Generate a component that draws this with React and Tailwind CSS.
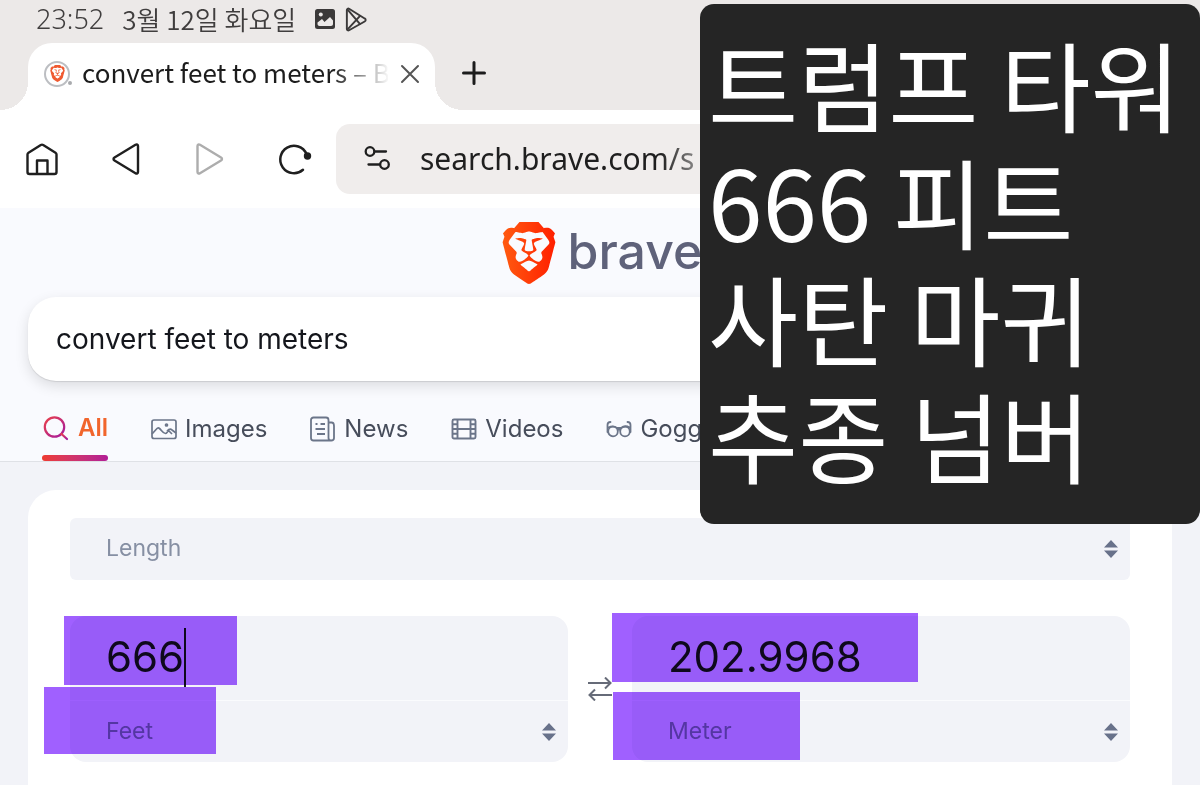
import { useState } from 'react';
import { SiBrave } from 'react-icons/si';

function Sorter({ className = '' }) {
    return (
        <svg viewBox="0 0 14 18" className={`pointer-events-none absolute h-[18px] w-[14px] fill-[#68718a] ${className}`}>
            <path d="M7 0l7 7.5H0zM7 18L0 10.5h14z" />
        </svg>
    );
}

function StatusBar() {
    return (
        <div className="flex h-[43px] items-start pl-9 pt-1 text-[26px] leading-[30px] font-[350] text-[#403e3e] font-['Noto_Sans_CJK_KR',sans-serif]">
            <span className="text-[27px] font-['Noto_Sans',sans-serif]">23:52</span>
            <span className="ml-[18px]">3월 12일 화요일</span>
            <svg viewBox="0 0 22 22" className="ml-[18px] mt-1 h-[22px] w-[22px]">
                <rect x="1" y="1" width="20" height="20" rx="2.5" fill="#3b3939" />
                <path d="M3.5 14.5L8 11l2.500 3 5.500-5 3 3.500V16c0 1-1 2-2 2H5.500c-1 0-2-1-2-2z" fill="#ece9e8" />
                <circle cx="6.800" cy="6.500" r="2" fill="#ece9e8" />
            </svg>
            <svg viewBox="0 0 24 26" className="ml-2 mt-[3px] h-[25px] w-6 fill-none stroke-[#3b3939] stroke-2" strokeLinejoin="round" strokeLinecap="round">
                <path d="M2.500 3.200v19.600c0 1.300 1.200 2 2.300 1.400L21 15.100c1.400-.8 1.400-2.400 0-3.200L4.800 1.800c-1.100-.6-2.300.1-2.300 1.400z" />
                <path d="M3.500 3L16 17.500M3.500 23L16 9.500" />
            </svg>
        </div>
    );
}

function TabStrip() {
    return (
        <div className="flex h-[67px] items-end">
            <div className="h-7 w-7 bg-[radial-gradient(circle_at_0_0,transparent_28px,white_28px)]" />
            <div className="flex h-full w-[407px] items-center rounded-t-[24px] bg-white pb-[6px] pl-4 pr-3">
                <span className="relative flex h-[26px] w-[26px] shrink-0 items-center justify-center rounded-full border-2 border-[#bcbec2]">
                    <SiBrave className="text-[17px] text-[#ef5a31]" />
                    <i className="absolute -right-1 bottom-0 h-1 w-1 rounded-full bg-[#a9abae]" />
                </span>
                <span className="ml-3 w-[306px] overflow-hidden whitespace-nowrap pb-1 text-[26px] leading-9 text-[#1c1c1c] font-['Noto_Sans_CJK_KR',sans-serif] [mask-image:linear-gradient(to_right,black_250px,transparent_308px)]">
                    convert feet to meters – Brave
                </span>
                <button aria-label="Close tab" className="ml-3 shrink-0">
                    <svg viewBox="0 0 20 20" className="h-5 w-5 fill-none stroke-[#555] stroke-2" strokeLinecap="round">
                        <path d="M2 2l16 16M18 2L2 18" />
                    </svg>
                </button>
            </div>
            <div className="h-7 w-7 bg-[radial-gradient(circle_at_100%_0,transparent_28px,white_28px)]" />
            <button aria-label="New tab" className="-ml-px mb-[25px]">
                <svg viewBox="0 0 24 24" className="h-6 w-6 fill-none stroke-[#1c1c1c] stroke-3" strokeLinecap="round">
                    <path d="M12 1.500v21M1.500 12h21" />
                </svg>
            </button>
        </div>
    );
}

function Toolbar() {
    return (
        <div className="flex h-[98px] items-center bg-white pl-6">
            <div className="flex w-[312px] items-center gap-12">
                <button aria-label="Home">
                    <svg viewBox="0 0 36 36" className="h-9 w-9 fill-none stroke-[#1f1f1f] stroke-[2.4]" strokeLinejoin="round">
                        <path d="M3.500 13.500c0-.8.200-1.300 1-1.800L16.800 4c.8-.5 1.600-.5 2.400 0L31.500 11.700c.8.500 1 1 1 1.800V31c0 1.500-.5 2-2 2h-25c-1.500 0-2-.5-2-2z" />
                        <path d="M13 33V19.500h10.500V33" />
                    </svg>
                </button>
                <button aria-label="Back">
                    <svg viewBox="0 0 36 36" className="h-9 w-9 fill-none stroke-[#1f1f1f] stroke-[2.400]" strokeLinejoin="round">
                        <path d="M6.500 16.500L27.500 3.800c1.300-.8 2.500-.2 2.500 1.300v25.800c0 1.500-1.200 2.100-2.500 1.300L6.500 19.500c-1.300-.8-1.300-2.200 0-3z" />
                    </svg>
                </button>
                <button aria-label="Forward">
                    <svg viewBox="0 0 36 36" className="h-9 w-9 fill-none stroke-[#adadad] stroke-[2.400]" strokeLinejoin="round">
                        <path d="M29 16.500L8 3.800C6.700 3 5.500 3.600 5.500 5.100v25.800c0 1.500 1.200 2.100 2.500 1.300L29 19.500c1.300-.8 1.300-2.200 0-3z" />
                    </svg>
                </button>
                <button aria-label="Reload">
                    <svg viewBox="0 0 36 36" className="h-9 w-9 fill-none stroke-[#1f1f1f] stroke-[2.500]" strokeLinecap="round">
                        <path d="M27 28.800A13.700 13.700 0 1 1 30.500 13" />
                        <circle cx="31.500" cy="15" r="3.700" className="fill-[#1f1f1f] stroke-none" />
                    </svg>
                </button>
            </div>
            <label className="flex h-[70px] flex-1 items-center rounded-l-[14px] bg-[#f0edec] pl-7">
                <svg viewBox="0 0 28 26" className="h-[26px] w-7 fill-none stroke-[#1f1f1f] stroke-[2.300]" strokeLinecap="round">
                    <circle cx="6" cy="5.500" r="4.300" />
                    <path d="M11 5.500H22M4.500 18.500h11" />
                    <circle cx="20.500" cy="18.500" r="4.300" />
                </svg>
                <input
                    aria-label="Address"
                    readOnly
                    value="search.brave.com/s"
                    className="ml-7 w-[273px] bg-transparent text-[30px] leading-10 text-[#1f1f1f] outline-none font-['Noto_Sans',sans-serif] [mask-image:linear-gradient(to_right,black_240px,#0008_273px)]"
                />
            </label>
        </div>
    );
}

function NavItem({ label, children }) {
    return (
        <a href="#" className="flex items-center gap-2 text-[#474d5b]">
            {children}
            {label}
        </a>
    );
}

function SearchNav() {
    return (
        <nav className="flex h-[65px] gap-[43px] overflow-hidden pl-[42px] text-[24px] leading-8">
            <a href="#" className="flex flex-col justify-between font-semibold text-[#f1652c]">
                <span className="flex items-center gap-2 pt-4">
                    <svg viewBox="0 0 28 28" className="h-7 w-7 fill-none stroke-[url(#glass)] stroke-[2.200]" strokeLinecap="round">
                        <defs>
                            <linearGradient id="glass" x1="0" y1="0" x2="1" y2="1">
                                <stop stopColor="#e9404a" />
                                <stop offset="1" stopColor="#a31aa0" />
                            </linearGradient>
                        </defs>
                        <circle cx="12.500" cy="13" r="9.700" />
                        <path d="M19.500 20l5.500 5" />
                    </svg>
                    All
                </span>
                <i className="h-1.5 rounded-full bg-linear-to-r from-[#ee3b2e] to-[#b21c96]" />
            </a>
            <NavItem label="Images">
                <svg viewBox="0 0 26 26" className="h-[26px] w-[26px] fill-none stroke-[#6b7589] stroke-[1.700]" strokeLinejoin="round">
                    <rect x="1" y="4" width="24" height="18.500" rx="2" />
                    <path d="M1 18l4.500-5c.8-1 1.800-1.500 3-.5 2 1.700 3.500 5 6 5 1.500 0 2-3 3.500-2.500l3 3M16 15c1.500-1.500 3-3 5-1l4 3" />
                    <circle cx="15.500" cy="9" r="1" />
                </svg>
            </NavItem>
            <NavItem label="News">
                <svg viewBox="0 0 26 26" className="h-[26px] w-[26px] fill-none stroke-[#6b7589] stroke-[1.800]" strokeLinejoin="round">
                    <path d="M21.500 24.500h-18c-1.600 0-2.500-1-2.500-2.500V4c0-1.500 1-2.500 2.500-2.500H16c1.500 0 2.500 1 2.500 2.500v18c0 1.500 1 2.500 2.700 2.500s2.800-1 2.800-2.500V10c0-2-1-3.500-2.500-3.500h-3" />
                    <path d="M5.500 8h2M10.500 8H15M5.500 13H15M7 18h8" />
                </svg>
            </NavItem>
            <NavItem label="Videos">
                <svg viewBox="0 0 26 26" className="h-[26px] w-[26px] fill-none stroke-[#6b7589] stroke-[1.900]">
                    <rect x="1.500" y="3.500" width="23" height="19" rx="1.500" />
                    <path d="M6.500 3.500v19M19.500 3.500v19M6.500 13h13M2 8.200h4.500M2 13h4.500M2 17.800h4.500M19.500 8.200H24M19.500 13H24M19.500 17.800H24" />
                </svg>
            </NavItem>
            <NavItem label="Goggles">
                <svg viewBox="0 0 26 26" className="h-[26px] w-[26px] fill-none stroke-[#6b7589] stroke-[1.800]" strokeLinecap="round">
                    <circle cx="7" cy="15.500" r="4.800" />
                    <circle cx="19" cy="15.500" r="4.800" />
                    <path d="M1.500 16V9c0-1.800 1-3 3-3M24.500 16V9c0-1.800-1-3-3-3M2.500 11.500c3-1.500 6-1.500 8.500.5h4c2.500-2 6-2 8.500-.5M11.700 14c.8-.7 1.800-.7 2.600 0" />
                </svg>
            </NavItem>
        </nav>
    );
}

function SearchHeader() {
    const [query, setQuery] = useState('convert feet to meters');

    return (
        <header className="border-b border-[#dfe1e6] bg-[#f9fafe] px-7">
            <div className="flex h-[89px] items-center justify-center gap-2">
                <svg className="absolute h-0 w-0">
                    <linearGradient id="lion">
                        <stop stopColor="#ff5a10" />
                        <stop offset="1" stopColor="#ff1f00" />
                    </linearGradient>
                </svg>
                <SiBrave className="text-[62px]" fill="url(#lion)" />
                <span className="pb-1 text-[50px] leading-[60px] font-medium text-[#5f627a]">brave</span>
            </div>
            <input
                type="search"
                aria-label="Search"
                value={query}
                onChange={(e) => setQuery(e.target.value)}
                className="h-[84px] w-full appearance-none rounded-[28px] bg-white px-7 text-[28px] text-[#14161c] shadow-[0_5px_14px_rgba(0,0,0,0.12),0_1px_1px_rgba(0,0,0,0.1)] outline-none"
            />
            <div className="-mx-7 mt-[15px]">
                <SearchNav />
            </div>
        </header>
    );
}

function UnitBox({ unit, value, children }) {
    return (
        <div className="relative flex-1">
            <div className="overflow-hidden rounded-[16px] bg-[#f2f3f8]">
                <input
                    aria-label={`Value in ${unit}`}
                    defaultValue={value}
                    className="block h-[84px] w-full bg-transparent px-9 pb-1 text-[42px] leading-[60px] text-[#15171c] outline-none"
                />
                <div className="relative border-t border-[#fafbfd]">
                    <select aria-label="Unit" className="block h-[61px] w-full appearance-none bg-transparent px-9 text-[23px] text-[#868fa3] outline-none">
                        <option>{unit}</option>
                    </select>
                    <Sorter className="right-3 top-[22px]" />
                </div>
            </div>
            {children}
        </div>
    );
}

function Converter() {
    return (
        <main className="flex flex-1 flex-col bg-[#f2f3f8] px-7 pt-7">
            <section className="flex-1 rounded-t-[28px] bg-white px-[42px] pt-7 pb-6">
                <div className="relative rounded-md bg-[#f2f3f8]">
                    <select aria-label="Quantity" className="block h-[62px] w-full appearance-none bg-transparent px-9 pb-0.5 text-[23px] text-[#868fa3] outline-none">
                        <option>Length</option>
                    </select>
                    <Sorter className="right-3 top-[22px]" />
                </div>
                <div className="mt-9 flex">
                    <UnitBox unit="Feet" value="666">
                        <i className="absolute left-[114px] top-3 h-[59px] w-[2px] bg-[#15171c]" />
                        <mark className="pointer-events-none absolute -left-1.5 top-0 h-[69px] w-[173px] bg-[#a060ff] mix-blend-multiply" />
                        <mark className="pointer-events-none absolute -left-[26px] top-[71px] h-[67px] w-[172px] bg-[#a060ff] mix-blend-multiply" />
                    </UnitBox>
                    <button aria-label="Swap units" className="flex w-16 items-center justify-center">
                        <svg viewBox="0 0 24 24" className="h-6 w-6 fill-none stroke-[#666b78] stroke-2">
                            <path d="M0 6h22.500M17 .500l5.500 5.500-5.500 5.500M24 18H1.500M7 12.500L1.500 18 7 23.500" />
                        </svg>
                    </button>
                    <UnitBox unit="Meter" value="202.9968">
                        <mark className="pointer-events-none absolute -left-5 -top-[3px] h-[69px] w-[306px] bg-[#a060ff] mix-blend-multiply" />
                        <mark className="pointer-events-none absolute -left-[19px] top-[76px] h-[68px] w-[187px] bg-[#a060ff] mix-blend-multiply" />
                    </UnitBox>
                </div>
            </section>
        </main>
    );
}

export default function App() {
    return (
        <div className="relative flex min-h-screen flex-col overflow-hidden bg-[#ece9e8] font-['Inter',sans-serif]">
            <StatusBar />
            <TabStrip />
            <Toolbar />
            <SearchHeader />
            <Converter />

            <aside className="absolute right-0 top-1 w-[500px] rounded-[14px] bg-[#252525] px-2 pt-5 pb-8 text-[98px] leading-[117px] text-white font-['Noto_Sans_CJK_KR',sans-serif]">
                <p>트럼프 타워</p>
                <p>666 피트</p>
                <p>사탄 마귀</p>
                <p>추종 넘버</p>
            </aside>
        </div>
    );
}
